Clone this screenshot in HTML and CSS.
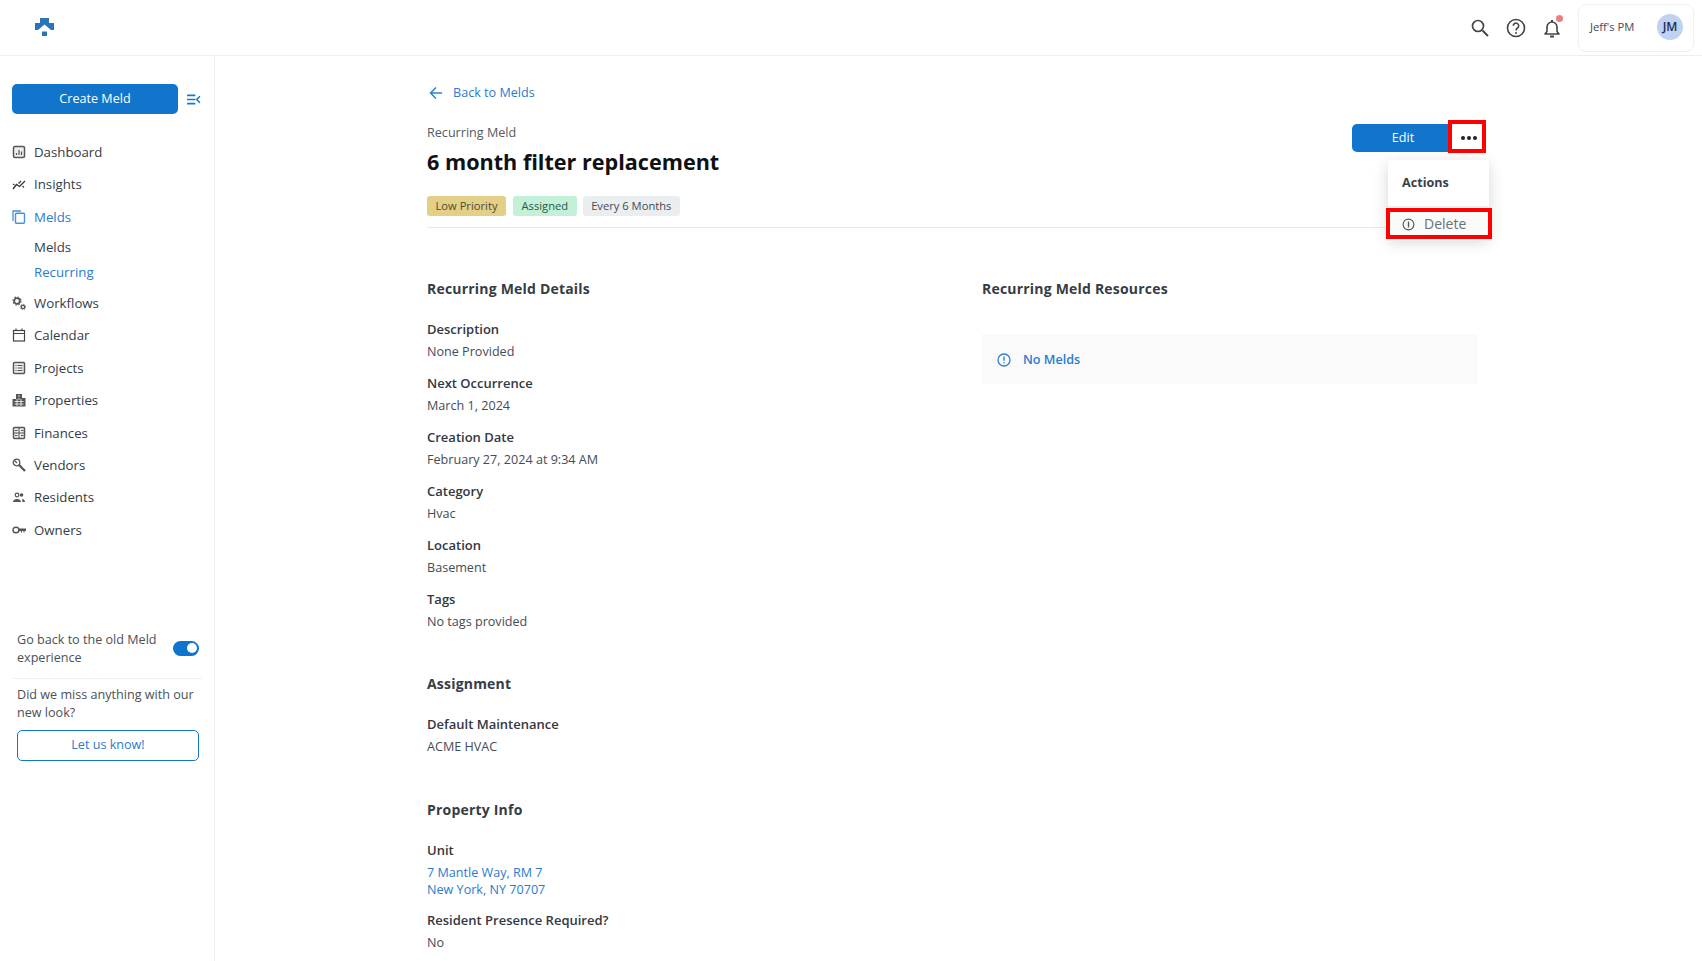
FILE: index.html
```html
<!DOCTYPE html>
<html lang="en">
<head>
<meta charset="utf-8">
<title>6 month filter replacement</title>
<link rel="stylesheet" href="styles.css">
</head>
<body>
<header class="topbar">
  <svg class="logo" viewBox="0 0 19 18" width="19" height="18"><path fill="#2a74b8" d="M5 0h9v5h5v7h-3L9.500 6.500 3 12H0V5h5z"/><path fill="#2a74b8" d="M7 13.500h5V18H7z"/></svg>
  <div class="top-actions">
    <svg class="ti" viewBox="0 0 24 24" width="24" height="24"><circle cx="10" cy="10" r="5.500" fill="none" stroke="#444" stroke-width="1.700"/><path d="M14.500 14.500 20 20" stroke="#444" stroke-width="2" fill="none"/></svg>
    <svg class="ti" viewBox="0 0 24 24" width="24" height="24"><circle cx="12" cy="12" r="8.500" fill="none" stroke="#444" stroke-width="1.600"/><path d="M9.300 9.800a2.700 2.700 0 1 1 4.200 2.200c-1 .7-1.500 1.200-1.500 2.400" fill="none" stroke="#444" stroke-width="1.600"/><circle cx="12" cy="17" r="1" fill="#444"/></svg>
    <span class="bell">
      <svg viewBox="0 0 24 24" width="24" height="24"><path d="M5 18h14l-2-2.500V11a5 5 0 0 0-10 0v4.500z" fill="none" stroke="#444" stroke-width="1.600" stroke-linejoin="round"/><path d="M10 20.500h4" stroke="#444" stroke-width="2" fill="none"/><path d="M12 4v2" stroke="#444" stroke-width="2"/></svg>
      <i class="dot"></i>
    </span>
    <div class="org"><span>Jeff's PM</span><b class="avatar">JM</b></div>
  </div>
</header>
<div class="shell">
  <aside class="sidebar">
    <div class="create-row">
      <button class="create">Create Meld</button>
      <svg viewBox="0 0 16 12" width="15" height="11"><path d="M1 1.500h9M1 6h9M1 10.500h9M15 2.500 11.500 6l3.500 3.500" fill="none" stroke="#1976cc" stroke-width="1.700"/></svg>
    </div>
    <nav class="nav">
      <a class="item"><svg viewBox="0 0 14 14" width="14" height="14"><rect x="1.500" y="1.500" width="11" height="11" rx="1.500" fill="#eee" stroke="#555" stroke-width="1.500"/><path d="M4.500 10V8M7 10V5M9.500 10V6.500" stroke="#555" stroke-width="1.200"/></svg>Dashboard</a>
      <a class="item"><svg viewBox="0 0 14 14" width="14" height="14"><path d="M1 12 4.500 7.500 7.500 9.500 13 4" fill="none" stroke="#333" stroke-width="1.300"/><path d="M1 7l1.500 1M6.500 5.500l1 1M7.500 5.500 9 4M10.500 9l1.500 1.500" stroke="#333" stroke-width="1.100"/></svg>Insights</a>
      <a class="item on"><svg viewBox="0 0 14 14" width="14" height="14"><path d="M1 11V1h8" fill="none" stroke="#4a90dc" stroke-width="1.300"/><rect x="3.500" y="3.300" width="9" height="10" rx="1" fill="none" stroke="#4a90dc" stroke-width="1.400"/></svg>Melds</a>
      <a class="sub">Melds</a>
      <a class="sub on">Recurring</a>
      <a class="item"><svg viewBox="0 0 14 14" width="14" height="14"><circle cx="5" cy="5" r="2.800" fill="none" stroke="#555" stroke-width="1.800"/><circle cx="5" cy="5" r="4" fill="none" stroke="#555" stroke-width="1.300" stroke-dasharray="1.500 1.640"/><circle cx="11" cy="11" r="1.700" fill="none" stroke="#555" stroke-width="1.300"/><circle cx="11" cy="11" r="2.700" fill="none" stroke="#555" stroke-width="1" stroke-dasharray="1.100 1.020"/></svg>Workflows</a>
      <a class="item"><svg viewBox="0 0 14 14" width="14" height="14"><rect x="1.500" y="2.500" width="11" height="10.500" fill="none" stroke="#444" stroke-width="1.200"/><path d="M1.500 5.500h11M4 .5v2M10 .5v2" stroke="#444" stroke-width="1.200"/></svg>Calendar</a>
      <a class="item"><svg viewBox="0 0 14 14" width="14" height="14"><rect x="1.500" y="1.500" width="11" height="11" rx="1" fill="#eee" stroke="#555" stroke-width="1.500"/><path d="M3.500 4.500h1M5.500 4.500h5M3.500 7h1M5.500 7h5M3.500 9.500h1M5.500 9.500h5" stroke="#555" stroke-width="1"/></svg>Projects</a>
      <a class="item"><svg viewBox="0 0 14 14" width="14" height="14"><path fill="#555" d="M4 1h6v4h3.500v8.500H.5V6H4z"/><path d="M6 3h2M6 6h2M2.500 8.500h9M2.500 11h9M5 6v7M9 6v7" stroke="#fff" stroke-width=".8"/></svg>Properties</a>
      <a class="item"><svg viewBox="0 0 14 14" width="14" height="14"><rect x="1.500" y="1.500" width="11" height="11" rx="1" fill="#eee" stroke="#555" stroke-width="1.500"/><path d="M1 7h12M7 1v12M3 4.500h2.500M9 9.500h2.500M9 4.500h2.500M3 9.500h2.500" stroke="#555" stroke-width="1"/></svg>Finances</a>
      <a class="item"><svg viewBox="0 0 14 14" width="14" height="14"><circle cx="4.500" cy="4.500" r="3.300" fill="none" stroke="#555" stroke-width="1.300"/><path d="M2.500 2.500 5 5" stroke="#555" stroke-width="1.200"/><path d="M6.800 6.800 13 13" stroke="#555" stroke-width="2.300"/></svg>Vendors</a>
      <a class="item"><svg viewBox="0 0 14 14" width="14" height="14"><circle cx="5" cy="5" r="1.800" fill="none" stroke="#555" stroke-width="1.200"/><circle cx="9.500" cy="5" r="1.800" fill="#555"/><path d="M1 12c0-2 2-3 4-3s4 1 4 3zM10 9c2 0 3 1.500 3 3h-2.500" fill="#555"/></svg>Residents</a>
      <a class="item"><svg viewBox="0 0 14 14" width="14" height="14"><ellipse cx="4" cy="7" rx="3" ry="2.800" fill="none" stroke="#555" stroke-width="1.400"/><path d="M7 6h6.800v1.500H7zM9.500 7.500v2M12 7.500v2" fill="#555" stroke="#555" stroke-width="1.100"/></svg>Owners</a>
    </nav>
    <div class="side-foot">
      <div class="toggle-row">
        <p>Go back to the old Meld experience</p>
        <span class="toggle"><i></i></span>
      </div>
      <div class="feedback">
        <p>Did we miss anything with our new look?</p>
        <button class="letus">Let us know!</button>
      </div>
    </div>
  </aside>
  <main class="main">
    <a class="back"><svg viewBox="0 0 14 14" width="14" height="14"><path d="M13 7H2M7 1.500 1.500 7 7 12.500" fill="none" stroke="#2f80d0" stroke-width="1.500"/></svg>Back to Melds</a>
    <div class="head">
      <div class="head-top">
        <div>
          <div class="eyebrow">Recurring Meld</div>
          <h1>6 month filter replacement</h1>
        </div>
        <div class="btn-group">
          <button class="edit">Edit</button>
          <button class="more"><i></i><i></i><i></i></button>
        </div>
      </div>
      <div class="tags">
        <span class="tag low">Low Priority</span>
        <span class="tag assigned">Assigned</span>
        <span class="tag every">Every 6 Months</span>
      </div>
    </div>
    <div class="columns">
      <section class="col-left">
        <h2>Recurring Meld Details</h2>
        <dl>
          <dt>Description</dt><dd>None Provided</dd>
          <dt>Next Occurrence</dt><dd>March 1, 2024</dd>
          <dt>Creation Date</dt><dd>February 27, 2024 at 9:34 AM</dd>
          <dt>Category</dt><dd>Hvac</dd>
          <dt>Location</dt><dd>Basement</dd>
          <dt>Tags</dt><dd>No tags provided</dd>
        </dl>
        <h2 class="sec">Assignment</h2>
        <dl>
          <dt>Default Maintenance</dt><dd>ACME HVAC</dd>
        </dl>
        <h2 class="sec sec-info">Property Info</h2>
        <dl>
          <dt>Unit</dt><dd class="link">7 Mantle Way, RM 7<br>New York, NY 70707</dd>
          <dt>Resident Presence Required?</dt><dd>No</dd>
        </dl>
      </section>
      <section class="col-right">
        <h2>Recurring Meld Resources</h2>
        <div class="empty"><svg viewBox="0 0 14 14" width="14" height="14"><circle cx="7" cy="7" r="6" fill="none" stroke="#2f80d0" stroke-width="1.300"/><path d="M7 3.500v4.200M7 9.200v1.300" stroke="#2f80d0" stroke-width="1.400"/></svg>No Melds</div>
      </section>
    </div>
  </main>
</div>
<div class="menu">
  <div class="menu-title">Actions</div>
  <div class="menu-item"><svg viewBox="0 0 14 14" width="13" height="13"><circle cx="7" cy="7" r="5.800" fill="none" stroke="#555" stroke-width="1.200"/><path d="M7 3.800v6.400" stroke="#555" stroke-width="1.400"/></svg>Delete</div>
</div>
<div class="mark mark-more"></div>
<div class="mark mark-delete"></div>
</body>
</html>
```
FILE: styles.css
```css
* { box-sizing: border-box; }
html, body { margin: 0; height: 961px; overflow: hidden; }
body { font-family: "Open Sans", sans-serif; font-size: 12.600px; line-height: 20px; color: #3a4149; background: #fff; position: relative; }
p, h1, h2, dl, dd { margin: 0; }
button { font: inherit; cursor: pointer; }

.topbar { height: 56px; border-bottom: 1px solid #eeeff0; display: flex; align-items: center; justify-content: space-between; padding: 0 8px 0 35px; }
.logo { margin-top: -2px; }
.top-actions { display: flex; align-items: center; }
.ti { margin-right: 12px; display: block; }
.bell { position: relative; width: 24px; height: 24px; margin-right: 14px; display: block; }
.dot { position: absolute; top: -1px; right: 1px; width: 7px; height: 7px; border-radius: 50%; background: #e88080; }
.org { width: 116px; height: 48px; border: 1px solid #eeeff0; border-radius: 8px; display: flex; align-items: center; justify-content: space-between; padding: 0 10px 0 11px; font-size: 11.200px; color: #3f4a5a; }
.org span { margin-top: -2px; }
.avatar { width: 26px; height: 26px; border-radius: 50%; background: #c0d2f0; color: #1d2a5c; display: flex; align-items: center; justify-content: center; font-size: 12px; font-weight: 600; margin-top: -1px; }

.shell { display: flex; height: 905px; }
.sidebar { width: 215px; border-right: 1px solid #eeeff0; padding: 28px 12px 0; flex: none; }
.create-row { display: flex; align-items: center; gap: 8px; }
.create { width: 166px; height: 30px; background: #1275cc; color: #fff; border: 0; border-radius: 5px; font-size: 12.600px; }
.nav { margin-top: 21.600px; display: flex; flex-direction: column; font-size: 13.250px; }
.item { height: 32.400px; display: flex; align-items: center; gap: 8px; color: #333c47; }
.item svg { flex: none; }
.item.on, .sub.on { color: #2a7ad0; }
.item.on { margin-bottom: 2px; }
.sub { height: 25px; display: flex; align-items: center; padding-left: 22px; color: #333c47; }
.sub.on { margin-bottom: 2px; }
.side-foot { margin-top: 85px; padding: 0 5px; color: #4a5058; line-height: 18px; }
.toggle-row { display: flex; align-items: center; justify-content: space-between; gap: 8px; padding-bottom: 11px; margin-right: -2px; }
.toggle-row p { width: 150px; }
.toggle { width: 26px; height: 15px; border-radius: 8px; background: #0f74cc; position: relative; flex: none; margin-top: -1px; }
.toggle i { position: absolute; top: 2.500px; right: 2px; width: 10px; height: 10px; border-radius: 50%; background: #fff; }
.feedback { border-top: 1px solid #eeeff0; margin: 0 -5px; padding: 7px 5px 0; }
.letus { width: 182px; height: 31px; margin-top: 8px; background: #fff; border: 1px solid #1275cc; border-radius: 5px; color: #2a7ad0; font-size: 12.600px; }

.main { flex: 1; padding: 27px 224px 0 212px; min-width: 0; }
.back { display: flex; align-items: center; gap: 10px; color: #2a7ad0; height: 20px; padding-left: 2px; }
.head { border-bottom: 1px solid #e8e9ea; height: 125px; padding-top: 20px; }
.head-top { display: flex; justify-content: space-between; align-items: flex-start; }
.eyebrow { color: #525a63; }
h1 { font-size: 21.600px; line-height: 32px; font-weight: 700; color: #0f1114; margin-top: 3px; }
.btn-group { display: flex; margin-top: 1px; margin-right: -8px; }
.edit { width: 96px; height: 28px; background: #1275cc; color: #fff; border: 0; border-radius: 5px 0 0 5px; padding-left: 12px; }
.more { width: 38px; height: 28px; background: #fff; border: 0; display: flex; align-items: center; justify-content: center; gap: 2px; padding: 0 0 0 3px; }
.more i { width: 4px; height: 4px; border-radius: 50%; background: #222; }
.tags { display: flex; gap: 7px; margin-top: 18px; }
.tag { height: 20px; display: flex; align-items: center; padding: 0 8.500px; border-radius: 3px; font-size: 11.200px; }
.low { background: #e4cf86; color: #4e4a32; }
.assigned { background: #c2f0d8; color: #2b5a48; }
.every { background: #ebeef1; color: #434a52; margin-left: -1px; }

.columns { display: flex; padding-top: 51px; }
.col-left { width: 555px; flex: none; }
.col-right { flex: 1; }
h2 { font-size: 14px; line-height: 20px; font-weight: 700; color: #363c44; letter-spacing: .2px; }
.sec { margin-top: 42px; }
.sec-info { margin-top: 43px; }
dl { margin-top: 20px; }
dt { font-weight: 600; color: #32383f; font-size: 13px; }
dd { margin-top: 3px; margin-bottom: 11px; color: #454c54; font-size: 12.600px; }
dd.link { color: #2a7ad0; line-height: 17px; margin-top: 4px; margin-bottom: 12px; }
.empty { margin-top: 35px; height: 50px; padding: 1px 0 0 15px; background: #fafafa; display: flex; align-items: center; gap: 12px; color: #2a7ad0; font-weight: 600; font-size: 12.600px; }

.menu { position: absolute; left: 1388px; top: 160px; width: 101px; height: 78px; background: #fff; border-radius: 4px; box-shadow: 0 4px 16px rgba(0,0,0,.16); }
.menu::before { content: ""; position: absolute; left: 70px; top: -6px; border: 6px solid transparent; border-top: 0; border-bottom-color: #f5f5f5; }
.menu-title { height: 47px; padding: 13px 14px 0; font-weight: 700; color: #3a3f46; border-bottom: 1px solid #eee; font-size: 12.600px; }
.menu-item { display: flex; align-items: center; gap: 9px; padding: 7px 14px; color: #6a7078; background: #fafafa; font-size: 14px; }
.mark { position: absolute; border: 4px solid #f00; }
.mark-more { left: 1448px; top: 120px; width: 38px; height: 33px; }
.mark-delete { left: 1386px; top: 208px; width: 106px; height: 31px; }
```
